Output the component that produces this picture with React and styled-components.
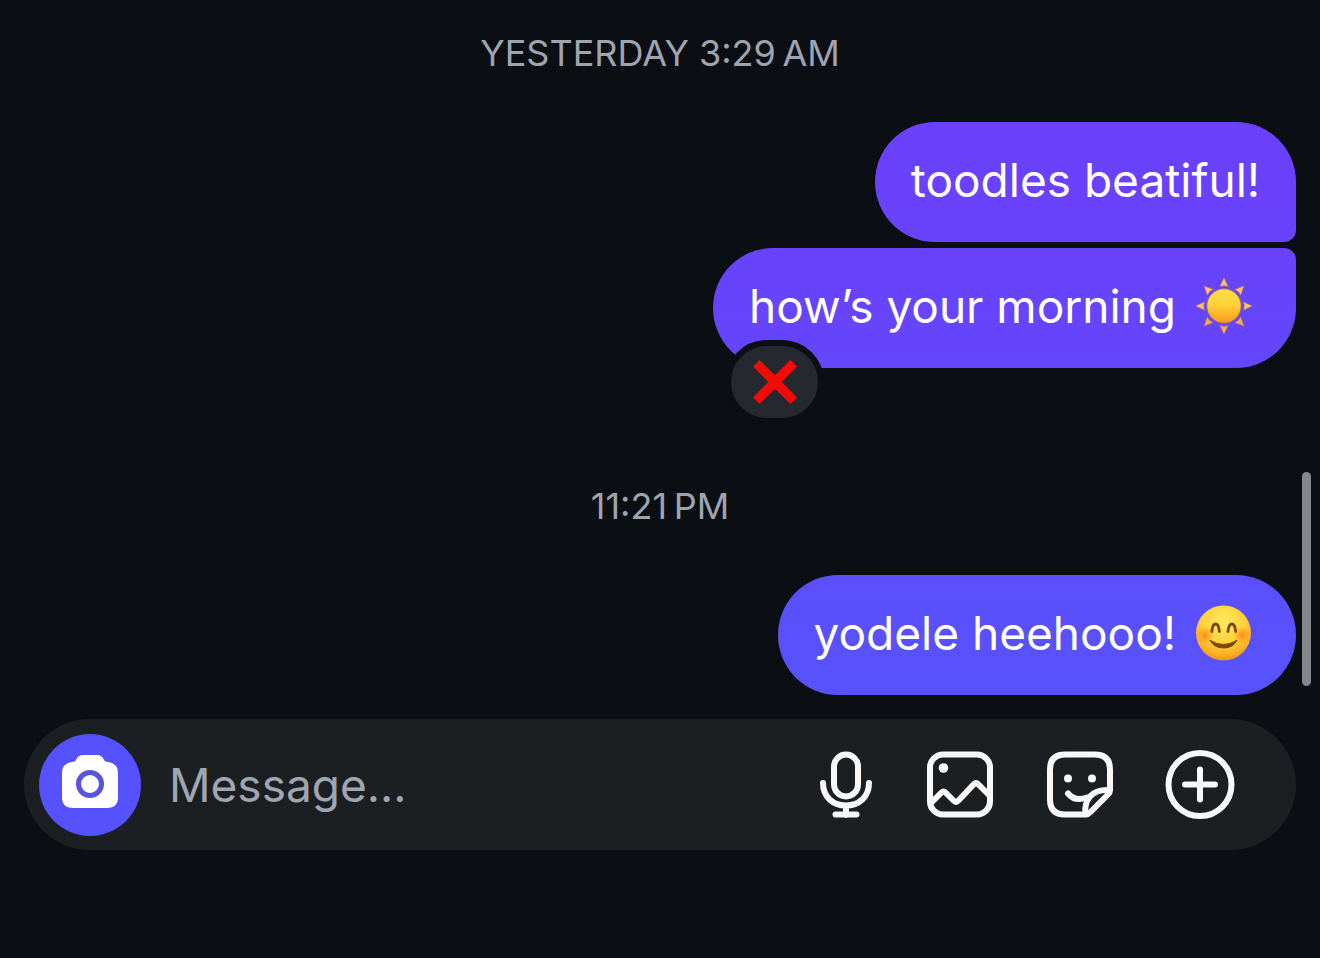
import React, { useState } from "react";
import styled, { createGlobalStyle } from "styled-components";

const GlobalStyle = createGlobalStyle`
  * { box-sizing: border-box; }
  body {
    margin: 0;
    background: #0b0e13;
    font-family: Inter, "Liberation Sans", sans-serif;
  }
`;

const Screen = styled.main`
  position: relative;
  min-height: 100vh;
  padding: 31px 24px 24px;
  display: flex;
  flex-direction: column;
  background: #0b0e13;
`;

const Thread = styled.section`
  display: flex;
  flex-direction: column;
  align-items: stretch;
`;

const Timestamp = styled.time`
  text-align: center;
  font-size: 36px;
  line-height: 44px;
  color: #9fa4b1;
`;

const Group = styled.div`
  display: flex;
  flex-direction: column;
  align-items: flex-end;
  gap: 6px;
  margin-top: 47px;
  margin-bottom: ${(p) => (p.$last ? "24px" : "116px")};
`;

const corners = {
  first: "60px 60px 12px 60px",
  last: "60px 12px 60px 60px",
  single: "60px",
};

const Bubble = styled.div`
  position: relative;
  display: flex;
  align-items: center;
  gap: 20px;
  padding: 30px ${(p) => (p.$emoji ? "44px" : "36px")} 34px 36px;
  border-radius: ${(p) => corners[p.$shape]};
  background: linear-gradient(${(p) => p.$from}, ${(p) => p.$to});
  color: #fff;
`;

const Words = styled.p`
  margin: 0;
  font-size: 46px;
  line-height: 56px;
`;

const Emoji = styled.svg`
  width: 56px;
  height: 56px;
  flex: none;
`;

const Reaction = styled.button`
  position: absolute;
  left: 12px;
  bottom: -56px;
  width: 99px;
  height: 84px;
  padding: 0;
  display: flex;
  align-items: center;
  justify-content: center;
  border: 6px solid #0b0e13;
  border-radius: 42px;
  background: #25282e;
`;

const Composer = styled.form`
  display: flex;
  align-items: center;
  height: 131px;
  padding: 0 60px 0 15px;
  border-radius: 66px;
  background: #1b1f21;
`;

const CameraButton = styled.button`
  flex: none;
  width: 102px;
  height: 102px;
  padding: 0;
  border: 0;
  border-radius: 50%;
  background: #5551fc;
  display: flex;
  align-items: center;
  justify-content: center;
`;

const MessageInput = styled.input`
  flex: 1;
  min-width: 0;
  height: 64px;
  margin: 0 24px 0 28px;
  padding: 0;
  border: 0;
  outline: 0;
  background: transparent;
  color: #fff;
  font-family: inherit;
  font-size: 46px;
  &::placeholder { color: #a0a5b2; opacity: 1; }
`;

const Tools = styled.div`
  display: flex;
  gap: 48px;
`;

const ToolButton = styled.button`
  width: ${(p) => (p.$narrow ? "60px" : "72px")};
  height: 72px;
  padding: 0;
  border: 0;
  background: transparent;
  display: flex;
  align-items: center;
  justify-content: center;
`;

const Glyph = styled.svg`
  flex: none;
  fill: none;
  stroke: #f8f8f9;
  stroke-width: 6;
  stroke-linecap: round;
  stroke-linejoin: round;
`;

const ScrollThumb = styled.div`
  position: absolute;
  top: 472px;
  right: 9px;
  width: 9px;
  height: 214px;
  border-radius: 5px;
  background: #85888a;
`;

const rays = [0, 45, 90, 135, 180, 225, 270, 315];

function Sun() {
  return (
    <Emoji viewBox="0 0 56 56" role="img" aria-label="sun">
      <defs>
        <linearGradient id="sunDisc" x1="0" y1="0" x2="0" y2="1">
          <stop offset="0" stopColor="#fedb4a" />
          <stop offset="0.45" stopColor="#fed33a" />
          <stop offset="1" stopColor="#fa981a" />
        </linearGradient>
      </defs>
      {rays.map((a) => (
        <path
          key={a}
          d="M28 -0.500L32.300 8.800Q28 6.800 23.700 8.800Z"
          fill={a > 90 && a < 270 ? "#fcaa52" : "#fdc26a"}
          stroke="#a0607a"
          strokeWidth="0.500"
          transform={`rotate(${a} 28 28)`}
        />
      ))}
      <circle cx="28" cy="28" r="17.200" fill="url(#sunDisc)" stroke="#a7655c" strokeWidth="0.900" />
    </Emoji>
  );
}

function Smile() {
  return (
    <Emoji viewBox="0 0 56 56" role="img" aria-label="smiling face">
      <defs>
        <radialGradient id="face" cx="0.5" cy="0.3" r="0.72">
          <stop offset="0" stopColor="#ffe95f" />
          <stop offset="0.5" stopColor="#ffd43c" />
          <stop offset="0.85" stopColor="#fbad22" />
          <stop offset="1" stopColor="#ee8a1a" />
        </radialGradient>
        <radialGradient id="blush">
          <stop offset="0" stopColor="#ff6b16" stopOpacity="0.65" />
          <stop offset="1" stopColor="#ff7a16" stopOpacity="0" />
        </radialGradient>
      </defs>
      <circle cx="27.500" cy="28" r="27.500" fill="url(#face)" />
      <circle cx="9" cy="30" r="9" fill="url(#blush)" />
      <circle cx="46" cy="30" r="9" fill="url(#blush)" />
      <path
        d="M15.800 26.500C16.300 21 17.600 19 19.600 19S23 21 23.400 26.500M32 26.500C32.500 21 33.800 19 35.800 19S39.200 21 39.600 26.500"
        fill="none"
        stroke="#7b4709"
        strokeWidth="2.800"
        strokeLinecap="round"
      />
      <path d="M14 35.200Q27.500 43.800 41 35.200Q37 43 27.500 43T14 35.200Z" fill="#7b4709" stroke="#7b4709" strokeWidth="1" strokeLinejoin="round" />
    </Emoji>
  );
}

function App() {
  const [draft, setDraft] = useState("");
  return (
    <>
      <GlobalStyle />
      <Screen>
        <Thread aria-label="Conversation">
          <Timestamp>YESTERDAY 3:29{"\u2009"}AM</Timestamp>
          <Group>
            <Bubble $shape="first" $from="#6b41fb" $to="#6942fb">
              <Words>toodles beatiful!</Words>
            </Bubble>
            <Bubble $shape="last" $emoji $from="#6843fb" $to="#6446fb">
              <Words>how’s your morning</Words>
              <Sun />
              <Reaction type="button" aria-label="Cross mark reaction">
                <svg width="46" height="46" viewBox="0 0 46 46" aria-hidden="true">
                  <path d="M7.500 1L23 16.200 38.500 1 45 7.500 29.800 23 45 38.500 38.500 45 23 29.800 7.500 45 1 38.500 16.200 23 1 7.500Z" fill="#f40a08" />
                </svg>
              </Reaction>
            </Bubble>
          </Group>
          <Timestamp>11:21{"\u2009"}PM</Timestamp>
          <Group $last>
            <Bubble $shape="single" $emoji $from="#5b4ffb" $to="#5752fb">
              <Words>yodele heehooo!</Words>
              <Smile />
            </Bubble>
          </Group>
        </Thread>
        <Composer onSubmit={(e) => e.preventDefault()}>
          <CameraButton type="button" aria-label="Camera">
            <svg width="56" height="60" viewBox="0 0 56 60" aria-hidden="true">
              <path d="M14 5Q16 0 21 0H35Q40 0 42 5Q43 7 46 7Q56 8.500 56 18V42Q56 53 45 53H11Q0 53 0 42V18Q0 8.500 10 7Q13 7 14 5Z" fill="#fff" />
              <circle cx="28" cy="29" r="11.500" fill="none" stroke="#5854df" strokeWidth="5" />
            </svg>
          </CameraButton>
          <MessageInput
            aria-label="Message"
            placeholder="Message…"
            value={draft}
            onChange={(e) => setDraft(e.target.value)}
          />
          <Tools>
            <ToolButton type="button" $narrow aria-label="Record voice message">
              <Glyph width="60" height="72" viewBox="0 0 60 72">
                <rect x="18" y="5.500" width="24" height="42" rx="12" />
                <path d="M7 34C7 48 17 56.500 30 56.500S53 48 53 34M30 57V66M19.500 65.500H40.500" />
              </Glyph>
            </ToolButton>
            <ToolButton type="button" aria-label="Add photo">
              <Glyph width="72" height="72" viewBox="0 0 72 72">
                <rect x="6" y="5.500" width="60" height="60" rx="13" />
                <circle cx="19.500" cy="19" r="4.800" fill="#f8f8f9" stroke="none" />
                <path d="M7 54L17.500 43.500Q19.500 41.500 21.500 43.500L29.500 51.500Q32 54 34.500 51.500L49.500 35.500Q52 33 54.500 35.500L65 46" />
              </Glyph>
            </ToolButton>
            <ToolButton type="button" aria-label="Add sticker">
              <Glyph width="72" height="72" viewBox="0 0 72 72">
                <path d="M42 65.500H21Q6 65.500 6 50.500V20.500Q6 5.500 21 5.500H51Q66 5.500 66 20.500V41.500Q66 43.500 64 45.500L46 63.500Q44 65.500 42 65.500Z" />
                <path d="M41.500 65Q40 55 46 47.500Q52 40.500 65 41" />
                <path d="M24 44.500Q31 53 43 48.500" />
                <circle cx="24" cy="29.500" r="4" fill="#f8f8f9" stroke="none" />
                <circle cx="48" cy="29.500" r="4" fill="#f8f8f9" stroke="none" />
              </Glyph>
            </ToolButton>
            <ToolButton type="button" aria-label="More options">
              <Glyph width="72" height="72" viewBox="0 0 72 72">
                <circle cx="36" cy="35.500" r="31.500" />
                <path d="M36 20.500V50.500M21 35.500H51" />
              </Glyph>
            </ToolButton>
          </Tools>
        </Composer>
        <ScrollThumb aria-hidden="true" />
      </Screen>
    </>
  );
}

export default App;
